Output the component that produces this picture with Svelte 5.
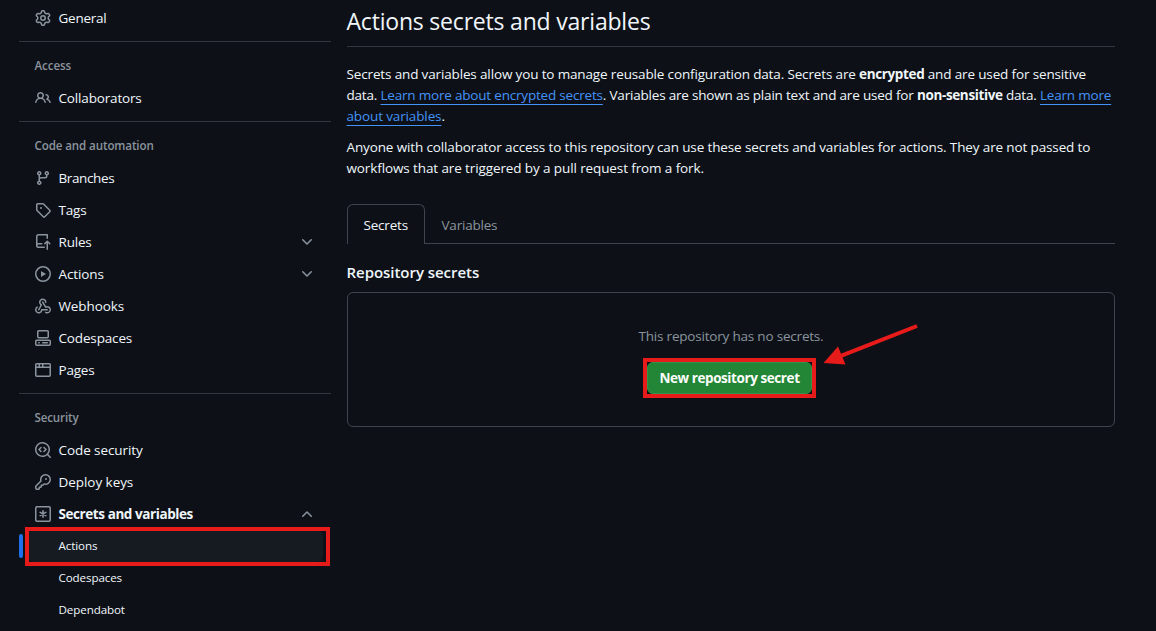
<script>
  const icons = {
    gear: 'M8 0a8.2 8.2 0 0 1 .701.031C9.444.095 9.99.645 10.16 1.29l.288 1.107c.018.066.079.158.212.224.231.114.454.243.668.386.123.082.233.09.299.071l1.103-.303c.644-.176 1.392.021 1.82.63.27.385.506.792.704 1.218.315.675.111 1.422-.364 1.891l-.814.806c-.049.048-.098.147-.088.294.016.257.016.515 0 .772-.01.147.038.246.088.294l.814.806c.475.469.679 1.216.364 1.891a7.977 7.977 0 0 1-.704 1.217c-.428.61-1.176.807-1.82.63l-1.102-.302c-.067-.019-.177-.011-.3.071a5.909 5.909 0 0 1-.668.386c-.133.066-.194.158-.211.224l-.29 1.106c-.168.646-.715 1.196-1.458 1.26a8.006 8.006 0 0 1-1.402 0c-.743-.064-1.289-.614-1.458-1.26l-.289-1.106c-.018-.066-.079-.158-.212-.224a5.738 5.738 0 0 1-.668-.386c-.123-.082-.233-.09-.299-.071l-1.103.303c-.644.176-1.392-.021-1.82-.63a8.12 8.12 0 0 1-.704-1.218c-.315-.675-.111-1.422.363-1.891l.815-.806c.05-.048.098-.147.088-.294a6.214 6.214 0 0 1 0-.772c.01-.147-.038-.246-.088-.294l-.815-.806C.635 6.045.431 5.298.746 4.623a7.92 7.92 0 0 1 .704-1.217c.428-.61 1.176-.807 1.82-.63l1.102.302c.067.019.177.011.3-.071.214-.143.437-.272.668-.386.133-.066.194-.158.211-.224l.29-1.106C6.009.645 6.556.095 7.299.03 7.53.01 7.764 0 8 0Zm-.571 1.525c-.036.003-.108.036-.137.146l-.289 1.105c-.147.561-.549.967-.998 1.189-.173.086-.34.183-.5.29-.417.278-.97.423-1.529.27l-1.103-.303c-.109-.03-.175.016-.195.045-.22.312-.412.644-.573.99-.014.031-.021.11.059.19l.815.806c.411.406.562.957.53 1.456a4.709 4.709 0 0 0 0 .582c.032.499-.119 1.05-.53 1.456l-.815.806c-.081.08-.073.159-.059.19.162.346.353.677.573.989.02.03.085.076.195.046l1.102-.303c.56-.153 1.113-.008 1.53.27.161.107.328.204.501.29.447.222.85.629.997 1.189l.289 1.105c.029.109.101.143.137.146a6.6 6.6 0 0 0 1.142 0c.036-.003.108-.036.137-.146l.289-1.105c.147-.561.549-.967.998-1.189.173-.086.34-.183.5-.29.417-.278.97-.423 1.529-.27l1.103.303c.109.029.175-.016.195-.045.22-.313.411-.644.573-.99.014-.031.021-.11-.059-.19l-.815-.806c-.411-.406-.562-.957-.53-1.456a4.709 4.709 0 0 0 0-.582c-.032-.499.119-1.05.53-1.456l.815-.806c.081-.08.073-.159.059-.19a6.464 6.464 0 0 0-.573-.989c-.02-.03-.085-.076-.195-.046l-1.102.303c-.56.153-1.113.008-1.53-.27a4.44 4.44 0 0 0-.501-.29c-.447-.222-.85-.629-.997-1.189l-.289-1.105c-.029-.11-.101-.143-.137-.146a6.6 6.6 0 0 0-1.142 0ZM11 8a3 3 0 1 1-6 0 3 3 0 0 1 6 0ZM9.5 8a1.5 1.5 0 1 0-3.001.001A1.5 1.5 0 0 0 9.5 8Z',
    people: 'M2 5.5a3.5 3.5 0 1 1 5.898 2.549 5.508 5.508 0 0 1 3.034 4.084.75.75 0 1 1-1.482.235 4 4 0 0 0-7.9 0 .75.75 0 0 1-1.482-.236A5.507 5.507 0 0 1 3.102 8.05 3.493 3.493 0 0 1 2 5.5ZM11 4a3.001 3.001 0 0 1 2.22 5.018 5.01 5.01 0 0 1 2.56 3.012.749.749 0 0 1-.885.954.752.752 0 0 1-.549-.514 3.507 3.507 0 0 0-2.522-2.372.75.75 0 0 1-.574-.73v-.352a.75.75 0 0 1 .416-.672A1.5 1.5 0 0 0 11 5.5.75.75 0 0 1 11 4Zm-5.5-.5a2 2 0 1 0-.001 3.999A2 2 0 0 0 5.5 3.5Z',
    branch: 'M9.5 3.25a2.25 2.25 0 1 1 3 2.122V6A2.5 2.5 0 0 1 10 8.5H6a1 1 0 0 0-1 1v1.128a2.251 2.251 0 1 1-1.5 0V5.372a2.25 2.25 0 1 1 1.5 0v1.836A2.493 2.493 0 0 1 6 7h4a1 1 0 0 0 1-1v-.628A2.25 2.25 0 0 1 9.5 3.25Zm-6 0a.75.75 0 1 0 1.5 0 .75.75 0 0 0-1.5 0Zm8.25-.75a.75.75 0 1 0 0 1.5.75.75 0 0 0 0-1.5ZM4.25 12a.75.75 0 1 0 0 1.5.75.75 0 0 0 0-1.5Z',
    tag: 'M1 7.775V2.75C1 1.784 1.784 1 2.75 1h5.025c.464 0 .91.184 1.238.513l6.25 6.25a1.75 1.75 0 0 1 0 2.474l-5.026 5.026a1.75 1.75 0 0 1-2.474 0l-6.25-6.25A1.752 1.752 0 0 1 1 7.775Zm1.5 0c0 .066.026.13.073.177l6.25 6.25a.25.25 0 0 0 .354 0l5.025-5.025a.25.25 0 0 0 0-.354l-6.25-6.25a.25.25 0 0 0-.177-.073H2.75a.25.25 0 0 0-.25.25ZM6 5a1 1 0 1 1 0 2 1 1 0 0 1 0-2Z',
    push: 'M1 2.5A2.5 2.5 0 0 1 3.5 0h8.75a.75.75 0 0 1 .75.75v3.5a.75.75 0 0 1-1.5 0V1.5h-8a1 1 0 0 0-1 1v6.708A2.493 2.493 0 0 1 3.5 9h3.25a.75.75 0 0 1 0 1.5H3.5a1 1 0 0 0 0 2h5.75a.75.75 0 0 1 0 1.5H3.5A2.5 2.5 0 0 1 1 11.5Zm13.23 7.79h-.001l-1.224-1.224v6.184a.75.75 0 0 1-1.5 0V9.066L10.28 10.29a.75.75 0 0 1-1.06-1.061l2.505-2.504a.75.75 0 0 1 1.06 0L15.29 9.23a.751.751 0 0 1-.018 1.042.751.751 0 0 1-1.042.018Z',
    play: 'M8 0a8 8 0 1 1 0 16A8 8 0 0 1 8 0ZM1.5 8a6.5 6.5 0 1 0 13 0 6.5 6.5 0 0 0-13 0Zm4.879-2.773 4.264 2.559a.25.25 0 0 1 0 .428l-4.264 2.559A.25.25 0 0 1 6 10.559V5.442a.25.25 0 0 1 .379-.215Z',
    webhook: 'M5.5 4.25a2.25 2.25 0 0 1 4.5 0 .75.75 0 0 0 1.5 0 3.75 3.75 0 1 0-6.14 2.889l-2.272 4.258a.75.75 0 0 0 1.324.706L7 7.25a.75.75 0 0 0-.309-1.015A2.25 2.25 0 0 1 5.5 4.25ZM7.364 3.607a.75.75 0 0 1 1.03.257l2.608 4.349a3.75 3.75 0 1 1-.628 6.785.75.75 0 0 1 .752-1.299 2.25 2.25 0 1 0-.033-3.88.75.75 0 0 1-1.03-.256L7.107 4.636a.75.75 0 0 1 .257-1.03ZM2.9 8.776A.75.75 0 0 1 2.625 9.8 2.25 2.25 0 1 0 6 11.75a.75.75 0 0 1 .75-.751h5.5a.75.75 0 0 1 0 1.5H7.425a3.751 3.751 0 1 1-5.55-3.998.75.75 0 0 1 1.024.274Z',
    codespaces: 'M0 11.25c0-.966.784-1.75 1.75-1.75h12.5c.966 0 1.75.784 1.75 1.75v3A1.75 1.75 0 0 1 14.25 16H1.75A1.75 1.75 0 0 1 0 14.25Zm2-9.5C2 .784 2.784 0 3.75 0h8.5C13.216 0 14 .784 14 1.75v5a1.75 1.75 0 0 1-1.75 1.75h-8.5A1.75 1.75 0 0 1 2 6.75Zm1.75-.25a.25.25 0 0 0-.25.25v5c0 .138.112.25.25.25h8.5a.25.25 0 0 0 .25-.25v-5a.25.25 0 0 0-.25-.25Zm-2 9.5a.25.25 0 0 0-.25.25v3c0 .138.112.25.25.25h12.5a.25.25 0 0 0 .25-.25v-3a.25.25 0 0 0-.25-.25ZM7 12.75a.75.75 0 0 1 .75-.75h4.5a.75.75 0 0 1 0 1.5h-4.5a.75.75 0 0 1-.75-.75Zm-4 0a.75.75 0 0 1 .75-.75h.5a.75.75 0 0 1 0 1.5h-.5a.75.75 0 0 1-.75-.75Z',
    browser: 'M0 2.75C0 1.784.784 1 1.75 1h12.5c.966 0 1.75.784 1.75 1.75v10.5A1.75 1.75 0 0 1 14.25 15H1.75A1.75 1.75 0 0 1 0 13.25ZM14.5 6h-13v7.25c0 .138.112.25.25.25h12.5a.25.25 0 0 0 .25-.25Zm-6-3.5v2h6V2.75a.25.25 0 0 0-.25-.25ZM5 2.5v2h2v-2Zm-3.25 0a.25.25 0 0 0-.25.25V4.5h2v-2Z',
    codescan: 'M8.47 4.97a.75.75 0 0 0 0 1.06L9.94 7.5 8.47 8.97a.75.75 0 1 0 1.06 1.06l2-2a.75.75 0 0 0 0-1.06l-2-2a.75.75 0 0 0-1.06 0ZM6.53 6.03a.75.75 0 0 0-1.06-1.06l-2 2a.75.75 0 0 0 0 1.06l2 2a.75.75 0 1 0 1.06-1.06L5.06 7.5l1.47-1.47ZM12.246 13.307a7.501 7.501 0 1 1 1.06-1.06l2.474 2.473a.749.749 0 0 1-.326 1.275.749.749 0 0 1-.734-.215ZM1.5 7.5a6.002 6.002 0 0 0 3.608 5.504 6.002 6.002 0 0 0 6.486-1.117.748.748 0 0 1 .292-.293A6 6 0 1 0 1.5 7.5Z',
    key: 'M10.5 0a5.499 5.499 0 1 1-1.288 10.848l-.932.932a.749.749 0 0 1-.53.22H7v.75a.749.749 0 0 1-.22.53l-.5.5a.749.749 0 0 1-.53.22H5v.75a.749.749 0 0 1-.22.53l-.5.5a.749.749 0 0 1-.53.22h-2A1.75 1.75 0 0 1 0 14.25v-2c0-.199.079-.389.22-.53l4.932-4.932A5.5 5.5 0 0 1 10.5 0Zm-4 5.5c-.001.431.069.86.205 1.269a.75.75 0 0 1-.181.768L1.5 12.56v1.69c0 .138.112.25.25.25h1.69l.06-.06v-1.19a.75.75 0 0 1 .75-.75h1.19l.06-.06v-1.19a.75.75 0 0 1 .75-.75h1.19l1.023-1.025a.75.75 0 0 1 .768-.18A4 4 0 1 0 6.5 5.5ZM11 6a1 1 0 1 1 0-2 1 1 0 0 1 0 2Z',
    chevron: 'M12.78 5.22a.749.749 0 0 1 0 1.06l-4.25 4.25a.749.749 0 0 1-1.06 0L3.22 6.28a.749.749 0 1 1 1.06-1.06L8 8.939l3.72-3.719a.749.749 0 0 1 1.06 0Z'
  };

  // track: letter spacing of the label, in px
  const groups = [
    { items: [{ icon: 'gear', label: 'General', track: -0.25 }] },
    { title: 'Access', track: -0.1, items: [{ icon: 'people', label: 'Collaborators', track: -0.16 }] },
    {
      title: 'Code and automation',
      track: -0.12,
      items: [
        { icon: 'branch', label: 'Branches', track: -0.38 },
        { icon: 'tag', label: 'Tags', track: -0.2 },
        { icon: 'push', label: 'Rules', track: -0.2, chevron: 'down' },
        { icon: 'play', label: 'Actions', track: -0.1, chevron: 'down' },
        { icon: 'webhook', label: 'Webhooks', track: -0.1 },
        { icon: 'codespaces', label: 'Codespaces', track: -0.15 },
        { icon: 'browser', label: 'Pages', track: -0.2 }
      ]
    },
    {
      title: 'Security',
      track: -0.15,
      items: [
        { icon: 'codescan', label: 'Code security', track: -0.08 },
        { icon: 'key', label: 'Deploy keys', track: -0.05 },
        {
          icon: 'asterisk', label: 'Secrets and variables', track: -0.42, chevron: 'up', bold: true,
          children: [
            { label: 'Actions', active: true },
            { label: 'Codespaces' },
            { label: 'Dependabot' }
          ]
        }
      ]
    }
  ];
</script>

{#snippet icon(name)}
  <svg class="icon" viewBox="0 0 16 16" width="16" height="16" aria-hidden="true">
    {#if name === 'asterisk'}
      <rect x=".75" y=".75" width="14.5" height="14.5" rx="1.2" fill="none" stroke="currentColor" stroke-width="1.5" />
      <path d="M8 4.7v6.6M5.15 6.35l5.7 3.3M10.85 6.35l-5.7 3.3" fill="none" stroke="currentColor" stroke-width="1.6" stroke-linecap="round" />
    {:else}
      <path d={icons[name]} />
    {/if}
  </svg>
{/snippet}

<div class="page">
  <nav class="sidebar">
    {#each groups as group}
      <section class="group">
        {#if group.title}
          <h3 style:letter-spacing="{group.track}px">{group.title}</h3>
        {/if}
        {#each group.items as item}
          <div class="item" class:bold={item.bold}>
            {@render icon(item.icon)}
            <span class="label" style:letter-spacing="{item.track}px">{item.label}</span>
            {#if item.chevron}
              <span class="chevron" class:up={item.chevron === 'up'}>{@render icon('chevron')}</span>
            {/if}
          </div>
          {#each item.children ?? [] as child}
            <div class="sub" class:active={child.active}>{child.label}</div>
          {/each}
        {/each}
      </section>
    {/each}
  </nav>

  <main>
    <h1>Actions secrets and variables</h1>
    <p>
      <span class="line l1">Secrets and variables allow you to manage reusable configuration data. Secrets are <b>encrypted</b> and are used for sensitive</span>
      <span class="line l2">data. <a href="#encrypted">Learn more about encrypted secrets</a>. Variables are shown as plain text and are used for <b>non-sensitive</b> data. <a href="#variables">Learn more</a></span>
      <span class="line"><a href="#variables">about variables</a>.</span>
    </p>
    <p class="second">
      <span class="line">Anyone with collaborator access to this repository can use these secrets and variables for actions. They are not passed to</span>
      <span class="line l5">workflows that are triggered by a pull request from a fork.</span>
    </p>
    <div class="tabs">
      <div class="tab selected">Secrets</div>
      <div class="tab">Variables</div>
    </div>
    <h2>Repository secrets</h2>
    <div class="blank">
      <span class="none">This repository has no secrets.</span>
      <div class="cta">
        <button>New repository secret</button>
        <svg class="arrow" width="96" height="42" viewBox="0 0 96 42" aria-hidden="true">
          <path d="M94 3 16 33.7" stroke="#e81b1b" stroke-width="4" fill="none" />
          <path d="M.5 40 15 23.5 22.5 41.5Z" fill="#e81b1b" />
        </svg>
      </div>
    </div>
  </main>
</div>

<style>
  :global(body) { background: #0d1117; overflow: hidden; }
  .page {
    display: flex;
    gap: 16px;
    box-sizing: border-box;
    width: 1156px;
    height: 631px;
    padding: 2px 41px 0 19px;
    overflow: hidden;
    background: #0d1117;
    color: #f0f6fc;
    font: 13.5px/21px "Open Sans", "Noto Sans", sans-serif;
    letter-spacing: -0.13px;
  }
  .sidebar { width: 312px; flex: none; }
  .group + .group { margin-top: 7px; border-top: 1px solid #30363d; }
  h3 {
    margin: 0;
    padding: 8px 15.5px 0;
    height: 32px;
    font-size: 11.6px;
    line-height: 32px;
    font-weight: 600;
    color: #8b949e;
  }
  .item { display: flex; align-items: center; height: 32px; padding: 0 16px; }
  .icon { display: block; flex: none; fill: currentColor; color: #8b949e; }
  .label { margin-left: 7.5px; flex: 1; line-height: 32px; white-space: nowrap; }
  .bold .label { font-weight: 700; }
  .chevron.up { transform: rotate(180deg); }
  .sub {
    position: relative;
    height: 32px;
    margin: 0 8px;
    padding-left: 31.5px;
    border-radius: 6px;
    font-size: 11.6px;
    line-height: 32px;
    letter-spacing: -0.1px;
  }
  .active { background: #161b22; }
  .active::before {
    content: "";
    position: absolute;
    left: -8px;
    top: 4px;
    width: 4px;
    height: 24px;
    border-radius: 6px;
    background: #1f6feb;
  }
  .active::after {
    content: "";
    position: absolute;
    left: -2.5px;
    top: -3px;
    width: 297px;
    height: 31px;
    border: 4px solid #e81b1b;
  }

  main { width: 768px; flex: none; }
  h1 {
    margin: 0 0 0 -0.5px;
    height: 44px;
    border-bottom: 1px solid #30363d;
    font-size: 23px;
    line-height: 39px;
    font-weight: 400;
    letter-spacing: -0.2px;
  }
  p { margin: 17px 0 0 -0.5px; }
  .second { margin-top: 10px; }
  .line { display: block; white-space: nowrap; }
  .l1 { letter-spacing: -0.145px; }
  .l2 { letter-spacing: -0.195px; }
  .l5 { letter-spacing: -0.11px; }
  b { font-weight: 700; letter-spacing: -0.36px; }
  a {
    color: #4493f8;
    text-decoration: underline;
    text-underline-offset: 3.5px;
    text-decoration-thickness: 1px;
    text-decoration-skip-ink: none;
  }
  .tabs { display: flex; margin-top: 25px; height: 40px; box-shadow: inset 0 -1px #3d444d; }
  .tab { padding: 0 16.5px; line-height: 42px; color: #8b949e; letter-spacing: -0.2px; }
  .selected {
    box-sizing: border-box;
    width: 78px;
    border: 1px solid #3d444d;
    border-bottom: 0;
    border-radius: 6px 6px 0 0;
    padding: 0 15.5px;
    line-height: 40px;
    background: #0d1117;
    color: #f0f6fc;
  }
  h2 { margin: 16px 0 8px -0.5px; font-size: 15px; line-height: 24px; font-weight: 600; letter-spacing: -0.04px; }
  .blank {
    box-sizing: border-box;
    height: 135px;
    border: 1px solid #3d444d;
    border-radius: 6px;
    padding-top: 33px;
    display: flex;
    flex-direction: column;
    align-items: center;
    color: #8b949e;
  }
  .none { letter-spacing: -0.2px; }
  .cta { position: relative; margin: 11px 3px 0 0; padding: 4px 4px 3.5px; outline: 4px solid #e81b1b; outline-offset: -4px; }
  button {
    display: block;
    box-sizing: border-box;
    width: 165px;
    height: 32px;
    border: 1px solid #35924a;
    border-radius: 6px;
    padding: 0;
    background: #238636;
    color: #fff;
    font: 700 13.5px/29px "Open Sans", "Noto Sans", sans-serif;
    letter-spacing: -0.42px;
  }
  .arrow { position: absolute; left: 180px; top: -35px; }
</style>
